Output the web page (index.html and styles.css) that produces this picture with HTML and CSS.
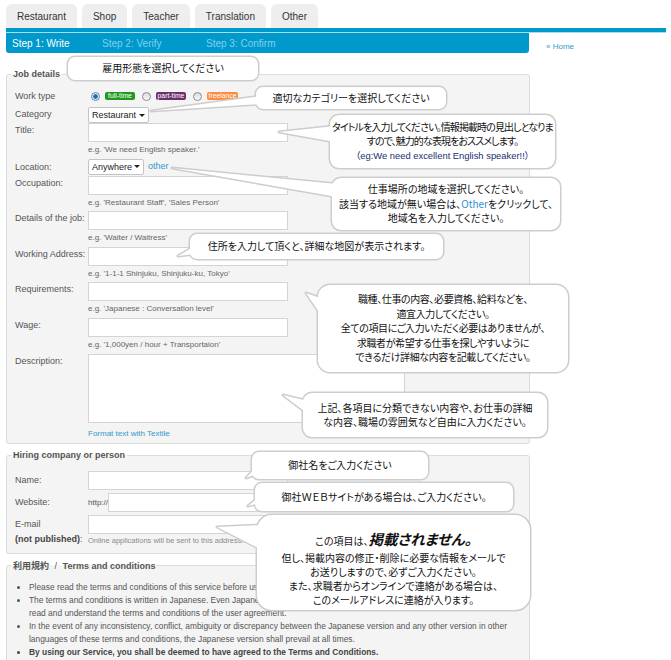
FILE: index.html
```html
<!DOCTYPE html>
<html lang="ja">
<head>
<meta charset="utf-8">
<title>Post a job</title>
<link rel="stylesheet" href="styles.css">
</head>
<body>
<div class="page">
  <nav class="tabs">
    <a class="tab">Restaurant</a>
    <a class="tab">Shop</a>
    <a class="tab">Teacher</a>
    <a class="tab">Translation</a>
    <a class="tab">Other</a>
  </nav>
  <div class="rule"></div>
  <div class="rule-light"></div>
  <div class="stepline">
    <div class="steps">
      <span class="step s1 current">Step 1: Write</span>
      <span class="step s2">Step 2: Verify</span>
      <span class="step s3">Step 3: Confirm</span>
    </div>
    <a class="home">« Home</a>
  </div>

  <form class="form">
    <fieldset class="box jobs">
      <legend>Job details</legend>
      <div class="row r-work">
        <span class="lbl">Work type</span>
        <div class="radios">
          <span class="radio checked"></span><span class="badge b-full">full-time</span>
          <span class="radio"></span><span class="badge b-part">part-time</span>
          <span class="radio"></span><span class="badge b-free">freelance</span>
        </div>
      </div>
      <div class="row r-cat">
        <span class="lbl">Category</span>
        <div><span class="select sel-cat">Restaurant<i class="caret"></i></span></div>
      </div>
      <div class="row r-field">
        <span class="lbl">Title:</span>
        <div><input class="text" type="text"><div class="hint">e.g. 'We need English speaker.'</div></div>
      </div>
      <div class="row r-loc">
        <span class="lbl">Location:</span>
        <div class="loc"><span class="select sel-loc">Anywhere<i class="caret"></i></span><a class="link">other</a></div>
      </div>
      <div class="row r-field">
        <span class="lbl">Occupation:</span>
        <div><input class="text" type="text"><div class="hint">e.g. 'Restaurant Staff', 'Sales Person'</div></div>
      </div>
      <div class="row r-field">
        <span class="lbl">Details of the job:</span>
        <div><input class="text" type="text"><div class="hint">e.g. 'Waiter / Waitress'</div></div>
      </div>
      <div class="row r-field">
        <span class="lbl">Working Address:</span>
        <div><input class="text" type="text"><div class="hint">e.g. '1-1-1 Shinjuku, Shinjuku-ku, Tokyo'</div></div>
      </div>
      <div class="row r-field">
        <span class="lbl">Requirements:</span>
        <div><input class="text" type="text"><div class="hint">e.g. 'Japanese : Conversation level'</div></div>
      </div>
      <div class="row r-field">
        <span class="lbl">Wage:</span>
        <div><input class="text" type="text"><div class="hint">e.g. '1,000yen / hour + Transportaion'</div></div>
      </div>
      <div class="row r-field">
        <span class="lbl">Description:</span>
        <div><textarea class="area"></textarea><div class="textile"><a class="link">Format text with Textile</a></div></div>
      </div>
    </fieldset>

    <fieldset class="box hiring">
      <legend>Hiring company or person</legend>
      <div class="row h-row">
        <span class="lbl">Name:</span>
        <div><input class="text" type="text"></div>
      </div>
      <div class="row h-row">
        <span class="lbl">Website:</span>
        <div class="web"><span class="http">http://</span><input class="text" type="text"></div>
      </div>
      <div class="row h-mail">
        <span class="lbl mail-lbl">E-mail<br><b>(not published)</b>:</span>
        <div><input class="text" type="text"><div class="hint small">Online applications will be sent to this address.</div></div>
      </div>
    </fieldset>

    <fieldset class="box terms">
      <legend><b class="jp">利用規約</b> <span class="slash">/</span> <b>Terms and conditions</b></legend>
      <ul class="rules">
        <li>Please read the terms and conditions of this service before using it.</li>
        <li>The terms and conditions is written in Japanese. Even Japanese speaking users are kindly asked to<br>read and understand the terms and conditions of the user agreement.</li>
        <li>In the event of any inconsistency, conflict, ambiguity or discrepancy between the Japanese version and any other version in other languages of these terms and conditions, the Japanese version shall prevail at all times.</li>
        <li class="strong">By using our Service, you shall be deemed to have agreed to the Terms and Conditions.</li>
      </ul>
    </fieldset>
  </form>

  <svg class="balloons" width="671" height="660" viewBox="0 0 671 660" aria-hidden="true">
    <g>
      <rect class="edge" x="68" y="57" width="190" height="23" rx="7"/>
      <rect class="fill" x="68" y="57" width="190" height="23" rx="7"/>
    </g>
    <g>
      <rect class="edge" x="256" y="87" width="190" height="22" rx="7"/>
      <polygon class="edge" points="261,96 151,111 261,104"/>
      <rect class="fill" x="256" y="87" width="190" height="22" rx="7"/>
      <polygon class="fill" points="261,96 151,111 261,104"/>
    </g>
    <g>
      <rect class="edge" x="330" y="115" width="225" height="53" rx="9"/>
      <polygon class="edge" points="335,126 279,132 335,142"/>
      <rect class="fill" x="330" y="115" width="225" height="53" rx="9"/>
      <polygon class="fill" points="335,126 279,132 335,142"/>
    </g>
    <g>
      <rect class="edge" x="332" y="178" width="228" height="52" rx="9"/>
      <polygon class="edge" points="337,184 172,168 337,197"/>
      <rect class="fill" x="332" y="178" width="228" height="52" rx="9"/>
      <polygon class="fill" points="337,184 172,168 337,197"/>
    </g>
    <g>
      <rect class="edge" x="190" y="234" width="253" height="25" rx="7"/>
      <polygon class="edge" points="195,246 178,256 195,254"/>
      <rect class="fill" x="190" y="234" width="253" height="25" rx="7"/>
      <polygon class="fill" points="195,246 178,256 195,254"/>
    </g>
    <g>
      <rect class="edge" x="318" y="285" width="250" height="87" rx="12"/>
      <polygon class="edge" points="323,299 306,293 323,318"/>
      <rect class="fill" x="318" y="285" width="250" height="87" rx="12"/>
      <polygon class="fill" points="323,299 306,293 323,318"/>
    </g>
    <g>
      <rect class="edge" x="303" y="393" width="244" height="44" rx="9"/>
      <polygon class="edge" points="308,401 283,395 308,414"/>
      <rect class="fill" x="303" y="393" width="244" height="44" rx="9"/>
      <polygon class="fill" points="308,401 283,395 308,414"/>
    </g>
    <g>
      <rect class="edge" x="252" y="452" width="176" height="27" rx="7"/>
      <polygon class="edge" points="257,466 246,478 257,474"/>
      <rect class="fill" x="252" y="452" width="176" height="27" rx="7"/>
      <polygon class="fill" points="257,466 246,478 257,474"/>
    </g>
    <g>
      <rect class="edge" x="255" y="483" width="258" height="28" rx="7"/>
      <polygon class="edge" points="260,496 248,506 260,503"/>
      <rect class="fill" x="255" y="483" width="258" height="28" rx="7"/>
      <polygon class="fill" points="260,496 248,506 260,503"/>
    </g>
    <g>
      <rect class="edge" x="257" y="515" width="273" height="95" rx="15"/>
      <polygon class="edge" points="263,525 217,527 262,550"/>
      <rect class="fill" x="257" y="515" width="273" height="95" rx="15"/>
      <polygon class="fill" points="263,525 217,527 262,550"/>
    </g>
  </svg>

  <div class="tip t1">雇用形態を選択してください</div>
  <div class="tip t2">適切なカテゴリーを選択してください</div>
  <div class="tip t3"><span>タイトルを入力してください。情報掲載時の見出しとなりま</span><span>すので、魅力的な表現をおススメします。</span><span class="eg">（eg:We need excellent English speaker!!）</span></div>
  <div class="tip t4"><span>仕事場所の地域を選択してください。</span><span>該当する地域が無い場合は、<em class="other">Other</em>をクリックして、</span><span>地域名を入力してください。</span></div>
  <div class="tip t5">住所を入力して頂くと、詳細な地図が表示されます。</div>
  <div class="tip t6"><span>職種、仕事の内容、必要資格、給料などを、</span><span>適宜入力してください。</span><span>全ての項目にご入力いただく必要はありませんが、</span><span>求職者が希望する仕事を探しやすいように</span><span>できるだけ詳細な内容を記載してください。</span></div>
  <div class="tip t7"><span>上記、各項目に分類できない内容や、お仕事の詳細</span><span>な内容、職場の雰囲気など自由に入力ください。</span></div>
  <div class="tip t8">御社名をご入力ください</div>
  <div class="tip t9">御社ＷＥＢサイトがある場合は、ご入力ください。</div>
  <div class="tip t10"><span class="first">この項目は、<strong class="big">掲載されません。</strong></span><span>但し、掲載内容の修正・削除に必要な情報をメールで</span><span>お送りしますので、必ずご入力ください。</span><span>また、求職者からオンラインで連絡がある場合は、</span><span>このメールアドレスに連絡が入ります。</span></div>
</div>
</body>
</html>
```
FILE: styles.css
```css
* { box-sizing: border-box; }
html, body { margin: 0; padding: 0; background: #fff; }
body { font-family: "Liberation Sans", Arial, "Noto Sans CJK JP", sans-serif; color: #555; }

.page { position: relative; width: 671px; height: 660px; overflow: hidden; }

/* tabs */
.tabs { display: flex; gap: 5px; padding: 4px 0 0 6px; height: 28px; }
.tab { display: block; height: 24px; line-height: 26px; padding: 0 11px; background: #eeeeee; border-radius: 6px 6px 0 0; font-size: 10px; color: #333; }

.rule { height: 4px; background: #0099cc; margin: 0 5px 0 6px; }
.rule-light { height: 1px; background: #a9dcee; margin: 0 5px 0 6px; }

.stepline { display: flex; margin-left: 6px; height: 20px; }
.steps { width: 523px; height: 20px; background: #0099cc; border-radius: 0 0 3px 3px; display: flex; align-items: center; font-size: 10px; color: #83cfec; }
.step { display: block; }
.s1 { width: 96px; padding-left: 6px; }
.s2 { width: 104px; }
.current { color: #fff; }
.home { font-size: 8px; color: #3399cc; margin: 9px 0 0 17px; line-height: 10px; }

/* form */
.form { margin-top: 16px; }
.box { margin: 0 0 6px 6px; width: 524px; border: 1px solid #dcdcdc; border-radius: 3px; background: #f4f4f4; padding: 0 0 0 8px; min-width: 0; }
.box legend { margin-left: -4px; padding: 0 2px; font-size: 9px; line-height: 11px; font-weight: bold; color: #555; }

.row { display: grid; grid-template-columns: 73px 1fr; }
.lbl { font-size: 9px; line-height: 12px; color: #555; }

.r-work { height: 16px; align-items: center; margin-top: 8px; }
.radios { display: flex; align-items: center; gap: 5px; padding-left: 2px; }
.radio { width: 9px; height: 9px; border-radius: 50%; border: 1px solid #8d8d8d; background: linear-gradient(#d8d8d8, #fbfbfb); display: block; margin-left: 1px; }
.radio.checked { background: radial-gradient(circle, #1f6fc9 0 2px, #e9f2fb 2.6px, #c9d9ea 100%); border-color: #6f86a0; }
.badge { display: block; height: 8px; line-height: 8px; font-size: 6.8px; color: #fff; text-align: center; border-radius: 2px; margin-right: 1px; }
.b-full { width: 30px; background: #1f9a1f; }
.b-part { width: 30px; background: #6b2f6b; }
.b-free { width: 31px; background: #ff8a3d; }

.r-cat { height: 19px; align-items: center; }
.select { display: inline-flex; align-items: center; justify-content: space-between; height: 16px; background: #fff; border: 1px solid #c4c4c4; border-radius: 2px; font-size: 9px; color: #222; padding: 0 3px 0 3px; }
.sel-cat { width: 61px; margin-top: 1px; }
.sel-loc { width: 56px; }
.caret { display: block; width: 0; height: 0; border-left: 3px solid transparent; border-right: 3px solid transparent; border-top: 3px solid #222; }

.r-loc { height: 17px; }
.r-loc .lbl { padding-top: 2px; }
.loc { display: flex; align-items: flex-start; }
.link { color: #3399cc; font-size: 9px; }
.loc .link { margin-left: 4px; line-height: 15px; }

.r-field .lbl { padding-top: 1px; }
.text { display: block; width: 200px; height: 19px; margin: 0; padding: 0 3px; border: 1px solid #d4d4d4; background: #fff; font-size: 9px; outline: none; }
.hint { height: 16.6px; line-height: 16.6px; font-size: 8px; color: #666; }
.area { display: block; width: 317px; height: 69px; margin: 0; padding: 2px; border: 1px solid #d4d4d4; background: #fff; resize: none; font-size: 9px; }
.textile { height: 16px; line-height: 16px; }
.textile .link { font-size: 8px; }
.jobs { padding-bottom: 4px; }

/* hiring */
.hiring { padding-top: 10px; padding-bottom: 5px; }
.h-row { align-items: center; margin-bottom: 3px; }
.web { display: flex; align-items: center; }
.http { font-size: 8px; color: #555; width: 20px; }
.h-mail .mail-lbl { line-height: 15px; padding-top: 2px; }
.mail-lbl b { color: #444; }
.hint.small { height: 14px; line-height: 14px; font-size: 7.5px; color: #8a8a8a; }

/* terms */
.terms { padding-bottom: 20px; }
.terms .jp { font-family: "Noto Sans CJK JP", sans-serif; font-weight: bold; }
.terms .slash { font-weight: normal; margin: 0 3px; }
.rules { margin: 9px 0 0 0; padding: 0 0 0 14px; font-size: 8.4px; line-height: 13.1px; color: #555; }
.rules .strong { font-weight: bold; color: #444; }

/* balloons */
.balloons { position: absolute; left: 0; top: 0; pointer-events: none; }
.edge { fill: #fff; stroke: #cdcdcd; stroke-width: 3; stroke-linejoin: round; }
.fill { fill: #fff; }

.tip { position: absolute; display: flex; flex-direction: column; align-items: center; justify-content: center; text-align: center; font-family: "Noto Sans CJK JP", sans-serif; font-size: 10px; line-height: 14.5px; color: #111; font-feature-settings: "palt"; white-space: nowrap; }
.tip span { display: block; }
.t1 { left: 68px; top: 57px; width: 190px; height: 23px; }
.t2 { left: 256px; top: 87px; width: 190px; height: 22px; }
.t3 { left: 330px; top: 115px; width: 225px; height: 53px; letter-spacing: -0.9px; }
.t4 { left: 332px; top: 178px; width: 228px; height: 52px; }
.t5 { left: 190px; top: 234px; width: 253px; height: 25px; }
.t6 { left: 318px; top: 285px; width: 250px; height: 87px; letter-spacing: -0.4px; }
.t7 { left: 303px; top: 393px; width: 244px; height: 44px; }
.t8 { left: 252px; top: 452px; width: 176px; height: 27px; }
.t9 { left: 255px; top: 483px; width: 258px; height: 28px; }
.t10 { left: 257px; top: 515px; width: 273px; height: 95px; padding-top: 10px; line-height: 14px; }
.eg { color: #1c2c72; font-family: "Liberation Sans", Arial, "Noto Sans CJK JP", sans-serif; font-size: 9.4px; letter-spacing: 0; }
.other { font-style: normal; color: #2d8fd2; }
.first { line-height: 20px; }
.big { font-size: 14.5px; font-style: italic; font-weight: bold; }
```
